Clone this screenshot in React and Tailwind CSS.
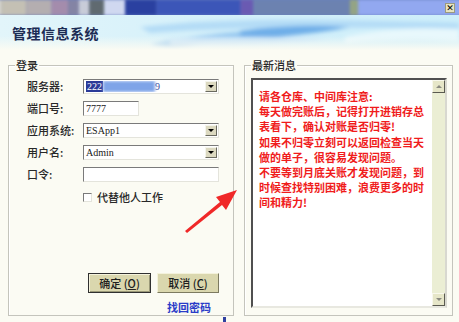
const CJK = "font-['Noto_Sans_CJK_SC','Noto_Sans',sans-serif]"

const inset = "border-t-[#7a7a7a] border-l-[#7a7a7a] border-b-[#e4e4dc] border-r-[#e4e4dc] border"

function DropBtn() {
  return (
    <div className="w-[12px] h-full bg-[#dcd9c0] border border-t-[#f4f4ec] border-l-[#f4f4ec] border-b-[#6a6a60] border-r-[#6a6a60] flex items-center justify-center">
      <div className="w-0 h-0 border-l-[3px] border-r-[3px] border-t-[3px] border-l-transparent border-r-transparent border-t-black" />
    </div>
  )
}

function Combo({ children }) {
  return (
    <div className={`w-[136px] h-[15px] bg-white ${inset} flex items-stretch p-[1px]`}>
      <div className="flex-1 flex items-center pl-[1px] text-[10px] font-['Liberation_Serif',serif] text-[#202020] overflow-hidden">{children}</div>
      <DropBtn />
    </div>
  )
}

function Row({ label, children }) {
  return (
    <div className="flex items-center h-[15px]">
      <span className="w-[56px] text-[11px] font-medium text-[#282828]">{label}</span>
      {children}
    </div>
  )
}

const news = [
  "请各仓库、中间库注意:",
  "每天做完账后，记得打开进销存总",
  "表看下，确认对账是否归零!",
  "如果不归零立刻可以返回检查当天",
  "做的单子，很容易发现问题。",
  "不要等到月底关账才发现问题，到",
  "时候查找特别困难，浪费更多的时",
  "间和精力!",
]

export default function App() {
  return (
    <div className={`relative w-[459px] h-[322px] overflow-hidden bg-[#fbfbf3] ${CJK}`}>
      {/* title bar, blurred */}
      <div className="relative h-[15px] overflow-hidden bg-[#6a80c0]">
        <div className="flex h-full blur-[1.5px] scale-105">
          <div className="w-[12px] bg-[#d8d8d0]" />
          <div className="w-[24px] bg-[#c4c0b4]" />
          <div className="w-[24px] bg-[#b4aeb0]" />
          <div className="w-[16px] bg-[#a48cac]" />
          <div className="w-[10px] bg-[#8484a4]" />
          <div className="w-[10px] bg-[#c8ccd8]" />
          <div className="w-[14px] bg-[#606a70]" />
          <div className="w-[20px] bg-[#d0d8f0]" />
          <div className="w-[30px] bg-[#2a40a0]" />
          <div className="w-[80px] bg-[#3c56b8]" />
          <div className="w-[12px] bg-[#6a5ab2]" />
          <div className="w-[92px] bg-[#6c82b0]" />
          <div className="w-[8px] bg-[#94a484]" />
          <div className="flex-1 bg-[#92a8f0]" />
        </div>
        <div className="absolute right-[4px] top-[3px] w-[10px] h-[10px] bg-[#e8e4c0] border border-[#9a9a80] flex items-center justify-center text-[9px] leading-none font-bold font-['DejaVu_Sans',sans-serif] text-black">✕</div>
      </div>

      {/* header band */}
      <div className="relative h-[35px]">
        <svg className="absolute inset-0" width="459" height="35" viewBox="0 0 459 35">
          <defs>
            <linearGradient id="hg" x1="0" y1="0" x2="1" y2="0">
              <stop offset="0" stopColor="#e2f5fa" />
              <stop offset="0.5" stopColor="#d4f0fa" />
              <stop offset="1" stopColor="#cdeefa" />
            </linearGradient>
            <linearGradient id="fade" x1="0" y1="0" x2="0" y2="1">
              <stop offset="0.6" stopColor="#fbfbf3" stopOpacity="0" />
              <stop offset="1" stopColor="#fbfbf3" stopOpacity="1" />
            </linearGradient>
            <filter id="bl"><feGaussianBlur stdDeviation="2" /></filter>
          </defs>
          <rect width="459" height="35" fill="url(#hg)" />
          <g filter="url(#bl)">
            <path d="M140 12 C220 2 330 4 459 8 L459 14 C330 12 230 12 150 18 Z" fill="#b4dcf6" />
            <path d="M150 30 C200 18 260 14 340 14 C300 20 250 26 170 34 Z" fill="#8cc2ee" />
            <path d="M240 16 C280 10 320 10 350 12 C320 18 280 22 240 24 Z" fill="#6eaee8" />
            <path d="M345 22 C380 14 420 12 459 14 L459 26 C420 24 380 24 345 28 Z" fill="#e8f8fc" />
            <path d="M170 24 C230 20 280 22 330 24 C280 30 220 32 170 30 Z" fill="#c4e2f8" />
          </g>
          <rect width="459" height="35" fill="url(#fade)" />
        </svg>
        <div className="relative pl-[12px] pt-[10px] text-[14px] leading-[16px] font-bold text-[#1c2c54] tracking-[0.5px]">管理信息系统</div>
      </div>

      {/* body */}
      <div className="flex pt-[15px] pl-[8px] gap-[10px]">
        {/* login box */}
        <div className="relative w-[226px] h-[251px] border border-[#c4c4bc] shadow-[inset_1px_1px_0_#ffffff]">
          <span className="absolute left-[6px] top-[-7px] px-[1px] bg-[#fbfbf3] text-[11px] leading-[12px] font-medium text-[#282828]">登录</span>
          <div className="flex flex-col gap-[7px] pt-[13px] pl-[18px]">
            <Row label="服务器:">
              <Combo>
                <span className="bg-[#2a3a98] text-white px-[1px]">222</span>
                <span className="w-[52px] h-[11px] bg-[#7fa4e8] blur-[1.5px]" />
                <span className="text-[#3a4a9c]">9</span>
              </Combo>
            </Row>
            <Row label="端口号:">
              <div className={`w-[56px] h-[15px] bg-white ${inset} flex items-center pl-[2px] text-[10px] font-['Liberation_Serif',serif] text-[#202020]`}>7777</div>
            </Row>
            <Row label="应用系统:">
              <Combo>ESApp1</Combo>
            </Row>
            <Row label="用户名:">
              <Combo>Admin</Combo>
            </Row>
            <Row label="口令:">
              <div className={`w-[136px] h-[15px] bg-white ${inset}`} />
            </Row>
          </div>
          <div className="flex items-center gap-[5px] pl-[74px] mt-[10px] h-[10px]">
            <div className={`w-[9px] h-[9px] bg-white ${inset}`} />
            <span className="text-[11px] font-medium text-[#282828]">代替他人工作</span>
          </div>
          <div className="flex gap-[6px] pl-[79px] mt-[71px]">
            <button className="w-[63px] h-[20px] bg-[#dad7ae] border border-[#303030] shadow-[inset_1px_1px_0_#f4f2dc,inset_-1px_-1px_0_#9a9878] text-[11px] font-medium text-[#202020]">确定 (<span className="underline">O</span>)</button>
            <button className="w-[62px] h-[20px] bg-[#dad7ae] border border-t-[#f4f2dc] border-l-[#f4f2dc] border-b-[#7c7a60] border-r-[#7c7a60] text-[11px] font-medium text-[#202020]">取消 (<span className="underline">C</span>)</button>
          </div>
          <div className="pl-[158px] mt-[8px] text-[11px] leading-[12px] font-bold text-[#2a3cc8]">找回密码</div>
        </div>

        {/* news box */}
        <div className="relative w-[209px] h-[251px] border border-[#c4c4bc] shadow-[inset_1px_1px_0_#ffffff]">
          <span className="absolute left-[6px] top-[-7px] px-[1px] bg-[#fbfbf3] text-[11px] leading-[12px] font-medium text-[#282828]">最新消息</span>
          <div className="ml-[6px] mt-[12px] w-[196px] h-[230px] flex bg-white border-2 border-t-[#505050] border-l-[#505050] border-b-[#e8e8e0] border-r-[#d8d8d0]">
            <div className="flex-1 pl-[6px] pt-[9px] text-[11px] leading-[15.2px] font-bold text-[#f01c1c] whitespace-nowrap">
              {news.map((l, i) => <div key={i}>{l}</div>)}
            </div>
            <div className="w-[13px] h-full flex flex-col bg-[#ebeed4]">
              <div className="h-[13px] bg-[#e6e6c8] border border-t-[#f8f8ec] border-l-[#f8f8ec] border-b-[#5a5a50] border-r-[#5a5a50] flex items-center justify-center">
                <div className="w-0 h-0 border-l-[3px] border-r-[3px] border-b-[3px] border-l-transparent border-r-transparent border-b-[#8a8a80]" />
              </div>
              <div className="flex-1" />
              <div className="h-[13px] bg-[#e6e6c8] border border-t-[#f8f8ec] border-l-[#f8f8ec] border-b-[#5a5a50] border-r-[#5a5a50] flex items-center justify-center">
                <div className="w-0 h-0 border-l-[3px] border-r-[3px] border-t-[3px] border-l-transparent border-r-transparent border-t-[#8a8a80]" />
              </div>
            </div>
          </div>
        </div>
      </div>

      {/* red annotation arrow */}
      <svg className="absolute left-0 top-0 pointer-events-none" width="459" height="322" viewBox="0 0 459 322">
        <path d="M187 233 L222 205 L226 210 L237 190 L216 197 L220 202 L185 231 Z" fill="#f02828" />
      </svg>
      <div className="absolute left-[223px] top-[317px] w-[3px] h-[5px] bg-[#3040a0]" />
    </div>
  )
}
